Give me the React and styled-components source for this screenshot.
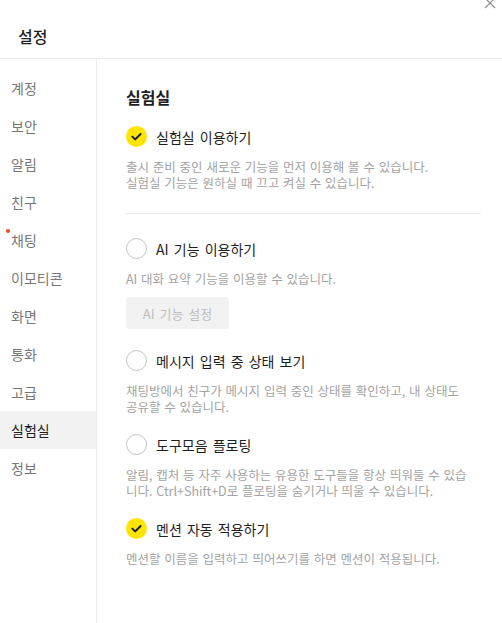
import React from "react";
import styled, { createGlobalStyle } from "styled-components";

const Global = createGlobalStyle`
  html, body { margin: 0; padding: 0; background: #fff; }
  body { font-family: "Noto Sans CJK KR", "Noto Sans", sans-serif; color: #1e1e1e; }
  * { box-sizing: border-box; }
`;

const Page = styled.div`
  display: flex;
  flex-direction: column;
  height: 100vh;
  overflow: hidden;
`;

const Header = styled.header`
  position: relative;
  flex: 0 0 59px;
  display: flex;
  align-items: center;
  padding: 14px 0 0 18px;
  border-bottom: 1px solid #ececec;
`;

const Title = styled.h1`
  margin: 0;
  font-size: 16px;
  font-weight: 500;
  line-height: 20px;
  color: #1e1e1e;
`;

const CloseButton = styled.button`
  position: absolute;
  top: -4px;
  right: 5px;
  width: 14px;
  height: 14px;
  padding: 0;
  border: 0;
  background: transparent;
  display: flex;
  align-items: center;
  justify-content: center;
`;

const Body = styled.div`
  flex: 1;
  display: flex;
  min-height: 0;
`;

const Sidebar = styled.nav`
  flex: 0 0 97px;
  border-right: 1px solid #ececec;
  padding-top: 10px;
  display: flex;
  flex-direction: column;
`;

const NavItem = styled.div`
  position: relative;
  height: 38px;
  display: flex;
  align-items: center;
  padding-left: 11px;
  font-size: 14px;
  color: ${(p) => (p.$active ? "#1e1e1e" : "#777")};
  background: ${(p) => (p.$active ? "#f2f2f2" : "transparent")};
`;

const Dot = styled.span`
  position: absolute;
  left: 6px;
  top: 8px;
  width: 4px;
  height: 4px;
  border-radius: 50%;
  background: #f04a23;
`;

const Content = styled.main`
  flex: 1;
  padding: 27px 21px 0 29px;
  display: flex;
  flex-direction: column;
`;

const SectionTitle = styled.h2`
  margin: 0 0 18px;
  font-size: 16px;
  font-weight: 700;
  line-height: 22px;
  color: #1e1e1e;
`;

const Options = styled.div`
  display: flex;
  flex-direction: column;
  gap: 19px;
`;

const Option = styled.div`
  display: flex;
  flex-direction: column;
`;

const Row = styled.label`
  display: flex;
  align-items: center;
  gap: 9px;
  height: 21px;
  font-size: 14px;
  word-spacing: 2px;
  color: #1e1e1e;
`;

const Circle = styled.span`
  flex: 0 0 21px;
  width: 21px;
  height: 21px;
  border-radius: 50%;
  display: flex;
  align-items: center;
  justify-content: center;
  background: ${(p) => (p.$checked ? "#fee500" : "#fff")};
  border: ${(p) => (p.$checked ? "none" : "1.5px solid #c4c4c4")};
`;

const Desc = styled.p`
  margin: 12px 0 0;
  max-width: 344px;
  font-size: 12.5px;
  word-spacing: 1px;
  line-height: 16px;
  color: #a3a3a3;
`;

const Divider = styled.hr`
  margin: 22px 0 24px;
  border: 0;
  border-top: 1px solid #ececec;
  height: 0;
`;

const SettingButton = styled.button`
  margin-top: 10px;
  margin-bottom: 2px;
  align-self: flex-start;
  width: 103px;
  height: 32px;
  border: 0;
  border-radius: 4px;
  background: #f2f2f2;
  color: #bdbdbd;
  font-family: inherit;
  font-size: 13px;
  word-spacing: 2px;
  padding: 0;
`;

const Check = ({ checked }) => (
  <Circle $checked={checked}>
    {checked && (
      <svg width="21" height="21" viewBox="0 0 21 21">
        <path
          d="M6.3 10.6 L9.2 13.4 L14.6 8"
          fill="none"
          stroke="#1a1a1a"
          strokeWidth="2"
          strokeLinecap="round"
          strokeLinejoin="round"
        />
      </svg>
    )}
  </Circle>
);

const navItems = [
  "계정",
  "보안",
  "알림",
  "친구",
  "채팅",
  "이모티콘",
  "화면",
  "통화",
  "고급",
  "실험실",
  "정보",
];

export default function App() {
  return (
    <Page>
      <Global />
      <Header>
        <Title>설정</Title>
        <CloseButton aria-label="닫기">
          <svg width="12" height="12" viewBox="0 0 12 12">
            <path d="M1 1 L11 11 M11 1 L1 11" stroke="#8a8a8a" strokeWidth="1.1" />
          </svg>
        </CloseButton>
      </Header>
      <Body>
        <Sidebar>
          {navItems.map((n) => (
            <NavItem key={n} $active={n === "실험실"}>
              {n === "채팅" && <Dot />}
              {n}
            </NavItem>
          ))}
        </Sidebar>
        <Content>
          <SectionTitle>실험실</SectionTitle>
          <Option>
            <Row>
              <Check checked />
              실험실 이용하기
            </Row>
            <Desc>
              출시 준비 중인 새로운 기능을 먼저 이용해 볼 수 있습니다.
              <br />
              실험실 기능은 원하실 때 끄고 켜실 수 있습니다.
            </Desc>
          </Option>
          <Divider />
          <Options>
            <Option>
              <Row>
                <Check />
                AI 기능 이용하기
              </Row>
              <Desc>AI 대화 요약 기능을 이용할 수 있습니다.</Desc>
              <SettingButton>AI 기능 설정</SettingButton>
            </Option>
            <Option>
              <Row>
                <Check />
                메시지 입력 중 상태 보기
              </Row>
              <Desc>
                채팅방에서 친구가 메시지 입력 중인 상태를 확인하고, 내 상태도 공유할 수 있습니다.
              </Desc>
            </Option>
            <Option>
              <Row>
                <Check />
                도구모음 플로팅
              </Row>
              <Desc>
                알림, 캡처 등 자주 사용하는 유용한 도구들을 항상 띄워둘 수 있습니다. Ctrl+Shift+D로 플로팅을 숨기거나 띄울 수 있습니다.
              </Desc>
            </Option>
            <Option>
              <Row>
                <Check checked />
                멘션 자동 적용하기
              </Row>
              <Desc>멘션할 이름을 입력하고 띄어쓰기를 하면 멘션이 적용됩니다.</Desc>
            </Option>
          </Options>
        </Content>
      </Body>
    </Page>
  );
}
